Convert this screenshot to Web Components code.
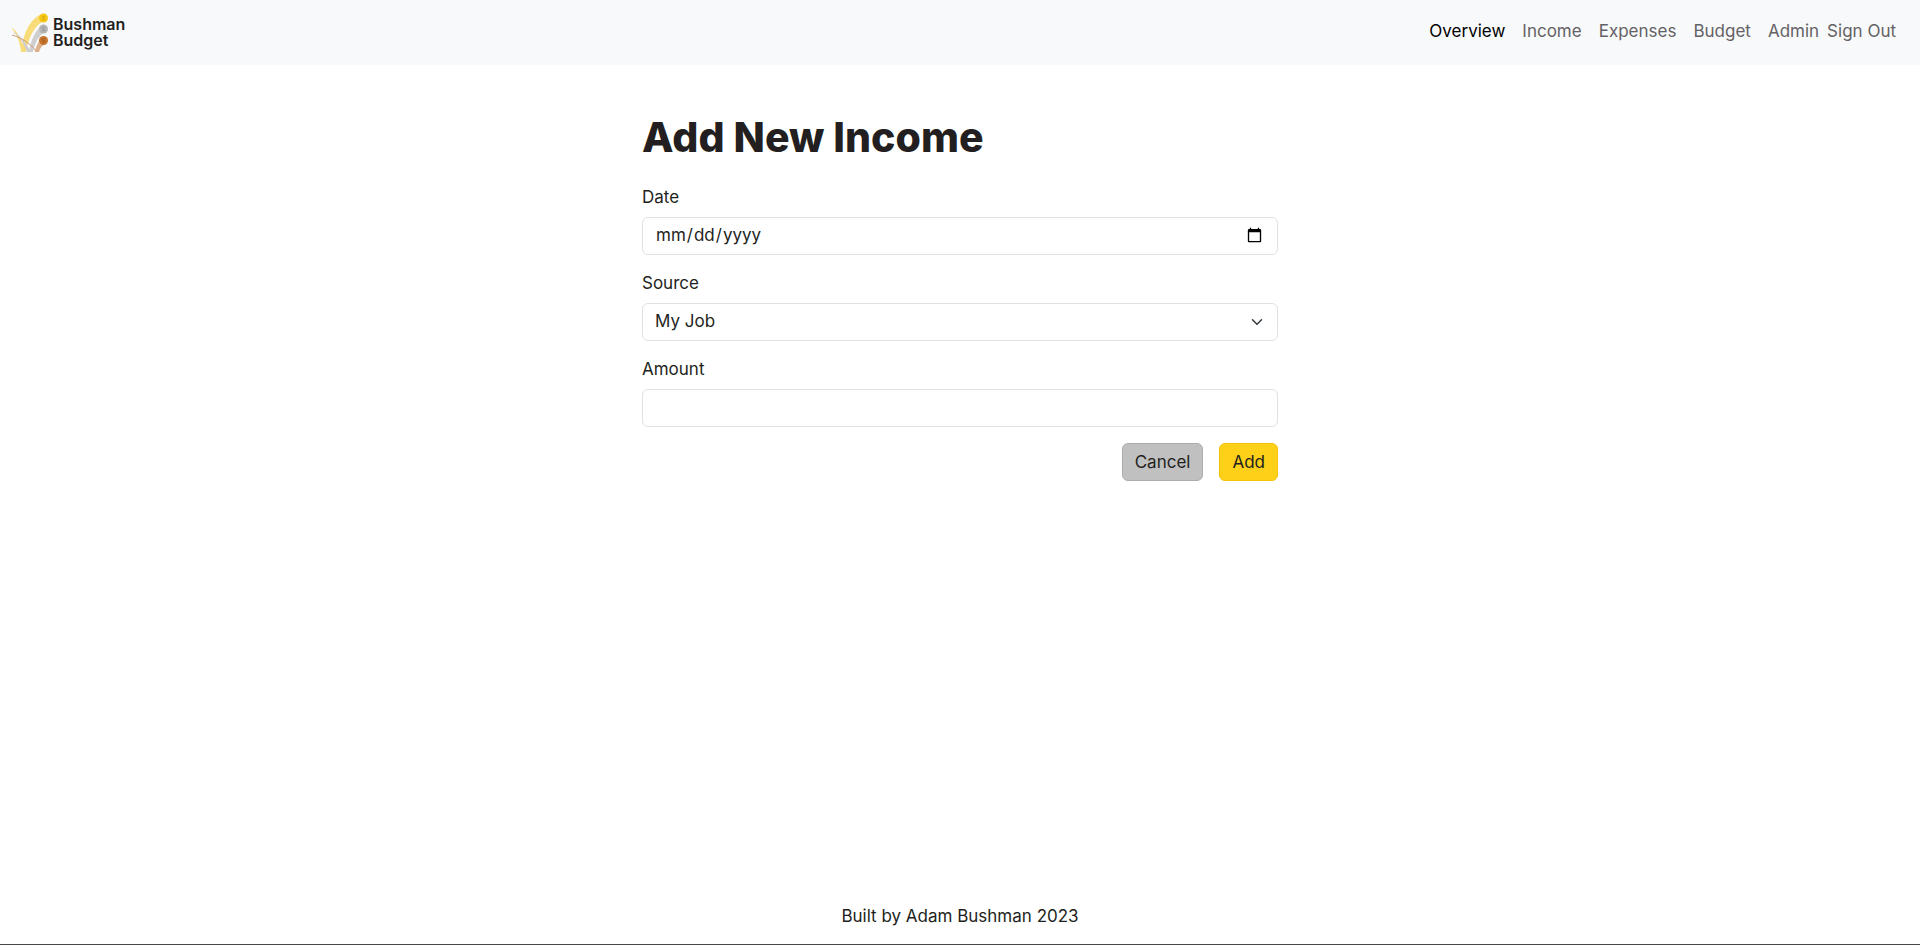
<!DOCTYPE html>
<html lang="en">
<head>
<meta charset="utf-8">
<title>Bushman Budget</title>
<style>
  html, body { margin: 0; height: 100%; }
  body { font: 400 17px/24px Inter, "Open Sans", sans-serif; color: #231f20; background: #fff; }
</style>
</head>
<body>
<budget-app></budget-app>

<template id="t-app">
  <style>
    :host { display: flex; flex-direction: column; min-height: 100%; box-sizing: border-box; border-bottom: 1px solid #4a4546; }
    main { flex: 1; width: 100%; max-width: 636px; margin: 0 auto; padding: 48px 12px; box-sizing: content-box; }
    @media (max-width: 660px) { main { box-sizing: border-box; } }
  </style>
  <site-header></site-header>
  <main><income-form></income-form></main>
  <site-footer>Built by Adam Bushman 2023</site-footer>
</template>

<template id="t-header">
  <style>
    :host { display: block; background: #f8f9fa; }
    header { display: flex; flex-wrap: wrap; align-items: center; justify-content: space-between; min-height: 65px; box-sizing: border-box; padding: 0 24px 0 12px; }
    nav { display: flex; flex-wrap: wrap; align-items: center; column-gap: 8px; padding-bottom: 4px; }
    .links { display: flex; flex-wrap: wrap; column-gap: 17px; }
    .home { text-decoration: none; color: inherit; }
  </style>
  <header>
    <a class="home" href="#"><brand-logo></brand-logo></a>
    <nav>
      <div class="links">
        <nav-link active>Overview</nav-link>
        <nav-link>Income</nav-link>
        <nav-link>Expenses</nav-link>
        <nav-link>Budget</nav-link>
        <nav-link>Admin</nav-link>
      </div>
      <nav-link>Sign Out</nav-link>
    </nav>
  </header>
</template>

<template id="t-logo">
  <style>
    :host { display: flex; align-items: center; gap: 4px; font-size: 16px; line-height: 16px; font-weight: 600; color: #231f20; }
    svg { display: block; width: 37px; height: 40px; }
    div { padding-bottom: 2px; }
  </style>
  <svg viewBox="0 0 37 40" aria-hidden="true">
    <path d="M9 39C11 22 17 6 30 1l2 7C22 12 16 26 14 39z" fill="#f8dc79"/>
    <path d="M0 15c6 4 10 12 12 24H9C8 29 5 21 0 16z" fill="#f8dc79"/>
    <path d="M17 39c2-12 6-22 14-27l2 7c-7 4-10 11-12 20z" fill="#cfcfd0"/>
    <path d="M2 19c8 5 12 11 17 20h-4C12 31 8 24 2 20z" fill="#cfcfd0"/>
    <path d="M23 39c1-6 4-12 8-15l2 7c-3 2-5 4-6 8z" fill="#deb18e"/>
    <path d="M0 22c10 3 18 8 25 17" fill="none" stroke="#cf9d76" stroke-width="1"/>
    <circle cx="31.500" cy="5" r="4.500" fill="#f5c816"/>
    <circle cx="31.500" cy="16" r="4.500" fill="#b5b5b6"/>
    <circle cx="31.500" cy="27.500" r="4.500" fill="#c87530"/>
    <g fill="none" stroke-width="1">
      <path d="M33 3.500c-3-1-4 1-1.500 1.500s1.500 2.500-1.500 1.500" stroke="#d9a90c"/>
      <path d="M33 14.500c-3-1-4 1-1.500 1.500s1.500 2.500-1.500 1.500" stroke="#999"/>
      <path d="M33 26c-3-1-4 1-1.500 1.500s1.500 2.500-1.500 1.500" stroke="#a65d20"/>
    </g>
  </svg>
  <div>Bushman<br>Budget</div>
</template>

<template id="t-link">
  <style>
    :host { display: block; }
    a { color: #646265; text-decoration: none; }
    :host([active]) a { color: #000; }
  </style>
  <a href="#"><slot></slot></a>
</template>

<template id="t-form">
  <style>
    :host { display: block; }
    h1 { margin: 0 0 24px; font-size: 41px; line-height: 48px; font-weight: 800; }
    form { display: flex; flex-direction: column; gap: 16px; }
    .field { display: flex; flex-direction: column; gap: 8px; }
    label { display: block; }
    input, select {
      display: block; width: 100%; height: 38px; box-sizing: border-box; margin: 0; padding: 5px 12px 7px;
      font: inherit; color: inherit; background: #fff; border: 1px solid #dee2e6; border-radius: 6px; outline: none;
    }
    select { appearance: none; }
    .pick { display: grid; align-items: center; }
    .pick > * { grid-area: 1 / 1; }
    .pick svg { width: 16px; height: 12px; justify-self: end; margin-right: 13px; pointer-events: none; }
    .actions { display: flex; justify-content: flex-end; gap: 16px; }
  </style>
  <h1>Add New Income</h1>
  <form>
    <div class="field">
      <label for="date">Date</label>
      <input id="date" type="date">
    </div>
    <div class="field">
      <label for="source">Source</label>
      <div class="pick">
        <select id="source"><option>My Job</option></select>
        <svg viewBox="0 0 16 16" aria-hidden="true"><path d="m2 5 6 6 6-6" fill="none" stroke="#343a40" stroke-width="2" stroke-linecap="round" stroke-linejoin="round"/></svg>
      </div>
    </div>
    <div class="field">
      <label for="amount">Amount</label>
      <input id="amount" type="text" inputmode="decimal">
    </div>
    <div class="actions">
      <action-button>Cancel</action-button>
      <action-button kind="primary">Add</action-button>
    </div>
  </form>
</template>

<template id="t-button">
  <style>
    :host { display: block; }
    button { display: block; height: 38px; margin: 0; padding: 0 12px; font: inherit; color: #231f20; background: #c0c0c0; border: 1px solid #acacac; border-radius: 6px; cursor: pointer; }
    :host([kind="primary"]) button { background: #fed018; border-color: #f5c20a; }
  </style>
  <button type="button"><slot></slot></button>
</template>

<template id="t-footer">
  <style>
    :host { display: block; text-align: center; }
    footer { padding: 16px; }
  </style>
  <footer><slot></slot></footer>
</template>

<script>
  class TemplateElement extends HTMLElement {
    constructor() {
      super();
      const template = document.getElementById(this.constructor.template);
      this.attachShadow({ mode: "open" }).append(template.content.cloneNode(true));
    }
  }
  class NavLink extends TemplateElement { static template = "t-link"; }
  class BrandLogo extends TemplateElement { static template = "t-logo"; }
  class ActionButton extends TemplateElement { static template = "t-button"; }
  class SiteHeader extends TemplateElement { static template = "t-header"; }
  class SiteFooter extends TemplateElement { static template = "t-footer"; }
  class IncomeForm extends TemplateElement { static template = "t-form"; }
  class BudgetApp extends TemplateElement { static template = "t-app"; }
  customElements.define("nav-link", NavLink);
  customElements.define("brand-logo", BrandLogo);
  customElements.define("action-button", ActionButton);
  customElements.define("site-header", SiteHeader);
  customElements.define("site-footer", SiteFooter);
  customElements.define("income-form", IncomeForm);
  customElements.define("budget-app", BudgetApp);
</script>
</body>
</html>
